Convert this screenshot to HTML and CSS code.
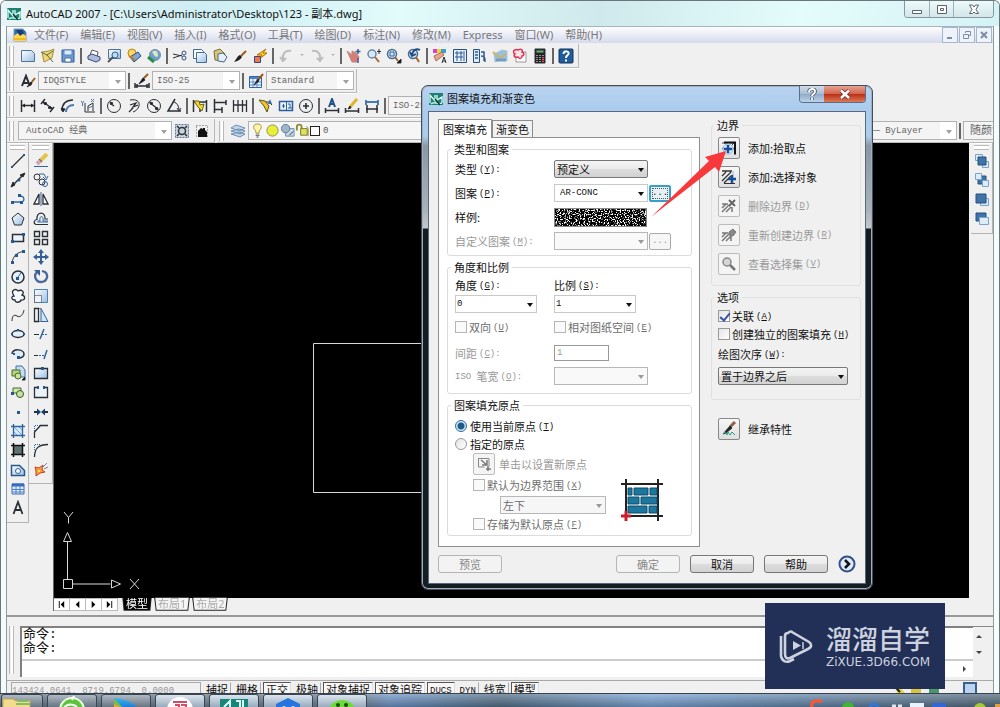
FILE: index.html
```html
<!DOCTYPE html>
<html lang="zh-CN">
<head>
<meta charset="utf-8">
<title>AutoCAD 2007</title>
<link rel="stylesheet" href="styles.css">
</head>
<body>
<svg width="0" height="0" class="defs" aria-hidden="true">
  <defs>
    <linearGradient id="sky" x1="0" y1="0" x2="1" y2="1"><stop offset="0" stop-color="#fff"/><stop offset="1" stop-color="#9cc0e4"/></linearGradient>
    <linearGradient id="play" x1="0" y1="0" x2="0" y2="1"><stop offset="0" stop-color="#36b8f0"/><stop offset="1" stop-color="#1c6fd0"/></linearGradient>
    <filter id="speckle" x="0" y="0" width="100%" height="100%">
      <feTurbulence type="fractalNoise" baseFrequency="0.75" numOctaves="2" seed="4"/>
      <feColorMatrix values="0 0 0 0 1  0 0 0 0 1  0 0 0 0 1  7 0 0 0 -3.5"/>
    </filter>
    <symbol id="logo" viewBox="0 0 16 16"><path d="M1 2h14v12H1z" fill="#1d8073"/><path d="M2 12V4l5 6V4M9 4v5l5-3v6M3 13c3-3 7 1 11-1" fill="none" stroke="#d9fff5" stroke-width="1.3"/><path d="M7 8l5 6" stroke="#083b38" stroke-width="1.4"/></symbol>
  </defs>
</svg>

<main class="app">
  <header class="titlebar">
    <svg class="ic"><use href="#logo"/></svg>
    <h1>AutoCAD 2007 - [C:\Users\Administrator\Desktop\123 - 副本.dwg]</h1>
    <div class="winbtns">
      <button aria-label="最小化"><svg viewBox="0 0 12 12"><path d="M1.500 7.500h9v3h-9z"/></svg></button>
      <button aria-label="最大化"><svg viewBox="0 0 12 12"><path d="M1.500 2.500h9v8h-9zM4.500 5.500h3v2h-3z"/></svg></button>
      <button class="wide" aria-label="关闭"><svg viewBox="0 0 12 12"><path d="M1.500 2h3L6 4l1.500-2h3L8 6.500l2.500 4h-3L6 9l-1.500 1.500h-3L4 6.500z"/></svg></button>
    </div>
  </header>

  <div class="client">
    <nav class="menubar">
      <svg class="ic" viewBox="0 0 16 16"><path d="M2 2h9l3 3v9H2z" fill="#2d6db5" stroke="#7a98b8"/><path d="M2 9c4-4 8-3 12 0v5H2z" fill="#ffd84d" stroke="none"/><path d="M4 3h6l2 3-4 3z" fill="#163e74" stroke="none"/><path d="M1 12h13" stroke="#f3b923" stroke-width="2"/></svg>
      <button>文件(F)</button><button>编辑(E)</button><button>视图(V)</button><button>插入(I)</button><button>格式(O)</button><button>工具(T)</button><button>绘图(D)</button><button>标注(N)</button><button>修改(M)</button><button>Express</button><button>窗口(W)</button><button>帮助(H)</button>
      <div class="mdi">
        <button aria-label="最小化文档"><svg viewBox="0 0 12 12"><path d="M3 9h5" stroke-width="2"/></svg></button>
        <button aria-label="还原文档"><svg viewBox="0 0 12 12"><path d="M4.500 4V2.500h5v4H8M2.500 5.500h5v4h-5z"/></svg></button>
        <button aria-label="关闭文档"><svg viewBox="0 0 12 12"><path d="M3 3l6 6M9 3l-6 6" stroke-width="2"/></svg></button>
      </div>
    </nav>

    <section class="toolrows">
      <div class="toolrow"><div class="toolbar">
        <i class="grip"></i>
        <button aria-label="新建"><svg class="ic" viewBox="0 0 16 16"><path d="M1.500 2.500h10l3 3v8h-13z" fill="url(#sky)" stroke="#4f7396"/></svg></button>
        <button aria-label="打开"><svg class="ic" viewBox="0 0 16 16"><path d="M2 4l7-1 5-2-2 9-8 4z" fill="#f1d671" stroke="#a88f42"/><path d="M1 4l6 3 6-4M7 7l6 7" stroke="#4f6f4c"/></svg></button>
        <button aria-label="保存"><svg class="ic" viewBox="0 0 16 16"><path d="M2 2h12v12H2z" fill="#6d9acf" stroke="#2f5f99"/><path d="M4 2h8v5H4z" fill="#d9eafb" stroke="#5b86b7"/><path d="M5 10h6v4H5z" fill="#fff" stroke="#4d78a8"/></svg></button>
        <i class="sep"></i>
        <button aria-label="打印"><svg class="ic" viewBox="0 0 16 16"><path d="M4 7l2-5 6 2-1 5" fill="#fff" stroke="#556"/><path d="M2 8l4-2 8 3v3l-4 2-8-3z" fill="#aebbdc" stroke="#3b4a78"/></svg></button>
        <button aria-label="打印预览"><svg class="ic" viewBox="0 0 16 16"><path d="M2.500 1.500h12v9h-12z" fill="url(#sky)" stroke="#4f7396"/><circle cx="9" cy="7" r="3" fill="#b9dcf7" stroke="#35618c"/><path d="M7 9l-5 5" stroke="#555" stroke-width="2"/></svg></button>
        <button aria-label="发布"><svg class="ic" viewBox="0 0 16 16"><circle cx="6" cy="5" r="4" fill="#ffd95e" stroke="#bb8616"/><path d="M4 9l8-5 3 4-7 6z" fill="#7fa6d4" stroke="#274c7e"/><path d="M3 8l6 4" stroke="#c67b18" stroke-width="2"/></svg></button>
        <button aria-label="三维 DWF"><svg class="ic" viewBox="0 0 16 16"><circle cx="9" cy="7" r="5.500" fill="#6d9fca" stroke="#6f93b2"/><path d="M6 4c4-3 6 0 6 3s-3 2-4 0z" fill="#d9e8c1" stroke="none"/><path d="M2 9l6 5" stroke="#2f8c44" stroke-width="3"/></svg></button>
        <i class="sep"></i>
        <button aria-label="剪切"><svg class="ic" viewBox="0 0 16 16"><path d="M1 6l9 2M1 10l9-3"/><circle cx="12" cy="5" r="2" stroke="#334f86"/><circle cx="12" cy="10" r="2" stroke="#334f86"/></svg></button>
        <button aria-label="复制"><svg class="ic" viewBox="0 0 16 16"><path d="M1.500 1.500h8l2 2v7h-10z" fill="#fff" stroke="#3e6d9c"/><path d="M4.500 4.500h8l2 2v8h-10z" fill="url(#sky)" stroke="#3e6d9c"/></svg></button>
        <button aria-label="粘贴"><svg class="ic" viewBox="0 0 16 16"><path d="M2 3l6-2 5 5-3 7-7-1z" fill="#d6c67b" stroke="#7d6e36"/><path d="M6 6l5-1 4 4-3 5-6-1z" fill="#e4f0fb" stroke="#45688d"/></svg></button>
        <button aria-label="特性匹配"><svg class="ic" viewBox="0 0 16 16"><path d="M14 3L9 8" stroke="#9a5b21" stroke-width="2"/><path d="M8 7l2 2c-2 3-4 4-8 5 2-2 3-6 6-7z" fill="#222" stroke="none"/></svg></button>
        <button aria-label="块编辑器"><svg class="ic" viewBox="0 0 16 16"><path d="M14 1l-9 6h5l-4 5 9-7h-4z" fill="#ffd21a" stroke="#b76b00"/><path d="M2.500 8.500h6v6h-6z" fill="#f4764e" stroke="#2f4b7b"/></svg></button>
        <i class="sep"></i>
        <button aria-label="放弃"><svg class="ic" viewBox="0 0 16 16"><path d="M13 3C7 2 4 6 5 12M2 9l3 4 3-3" stroke="#bdbdbd" stroke-width="2"/></svg></button>
        <button class="drop" aria-label="放弃列表"></button>
        <button aria-label="重做"><svg class="ic" viewBox="0 0 16 16"><path d="M3 3c6-1 9 3 8 9M8 10l3 3 3-4" stroke="#bdbdbd" stroke-width="2"/></svg></button>
        <button class="drop" aria-label="重做列表"></button>
        <i class="sep"></i>
        <button aria-label="实时平移"><svg class="ic" viewBox="0 0 16 16"><path d="M1 3l5 4V3l4 2 3 4-2 5H6z" fill="#d77d75" stroke="#c08883"/><path d="M12 1v5M9.500 3.500h5M12 10v5" stroke="#355f96" stroke-width="1.500"/></svg></button>
        <button aria-label="实时缩放"><svg class="ic" viewBox="0 0 16 16"><circle cx="6" cy="6" r="4" fill="#d7e9f7" stroke="#6889a7" stroke-width="1.500"/><path d="M9 9l4 5" stroke="#a4662f" stroke-width="2"/><path d="M13 1v5M11 3.500h4"/></svg></button>
        <button aria-label="窗口缩放"><svg class="ic" viewBox="0 0 16 16"><circle cx="6" cy="6" r="4.500" fill="#d7e9f7" stroke="#456b90" stroke-width="1.500"/><path d="M4 4h4v4H4z" stroke="#2e5a99"/><path d="M9 9l3 4" stroke="#a4662f" stroke-width="2"/><path d="M15 11v4h-4z" fill="#111"/></svg></button>
        <button aria-label="缩放上一个"><svg class="ic" viewBox="0 0 16 16"><circle cx="7" cy="6" r="4.500" fill="#d7e9f7" stroke="#456b90" stroke-width="1.500"/><path d="M10 9l3 5" stroke="#a4662f" stroke-width="2"/><path d="M14 2c-4-2-7 0-8 5M4 4l2 4 4-2" stroke="#234b83" stroke-width="1.800"/></svg></button>
        <i class="sep"></i>
        <button aria-label="特性"><svg class="ic" viewBox="0 0 16 16"><g stroke="none"><path d="M1 1h4v4H1z" fill="#e33ad2"/><path d="M5 1h4v4H5z" fill="#f0d91f"/><path d="M9 1h5v4H9z" fill="#2fa1e0"/></g><path d="M2 8l8-4 2 3-8 6z" fill="#e9a58c" stroke="#a9705b"/><path d="M10 15l2-6 2 6M11 13h3"/></svg></button>
        <button aria-label="设计中心"><svg class="ic" viewBox="0 0 16 16"><path d="M1.500 1.500h13v13h-13z" fill="#e5f0fa" stroke="#27507f"/><path d="M4 4h2v2H4zM8 4h2v2H8zM4 8h2v2H4zM8 8h2v2H8zM4 12h2M8 12h2M12 3v10" stroke="#2c5b93"/></svg></button>
        <button aria-label="工具选项板"><svg class="ic" viewBox="0 0 16 16"><path d="M1.500 1.500h6v13h-6z" fill="#dceaf7" stroke="#27507f"/><path d="M3 4h3M3 7h3M3 10h3M9 4h3v9M9 8c4 0 4 2 4 6" stroke="#2c5b93" stroke-width="1.500"/></svg></button>
        <button aria-label="图纸集"><svg class="ic" viewBox="0 0 16 16"><path d="M2 6l8-4 5 1v10l-6-2-6 3z" fill="#9ebfd9" stroke="#a9c4d8"/><path d="M1 4l7 6 6-4" stroke="#c8b36f" stroke-width="2"/><path d="M4 12h10" stroke="#6f9dc4" stroke-width="3"/></svg></button>
        <button aria-label="标记集"><svg class="ic" viewBox="0 0 16 16"><path d="M4 4h10v10H4z" fill="#fff" stroke="#999"/><path d="M3 2c2-1 3 0 3 0 3-2 5 0 4 2 3 1 2 4 0 4 0 3-3 3-4 1-3 1-5-1-3-3-2-1-2-4 0-4z" fill="#ffe4ea" stroke="#e03052" stroke-width="1.500"/></svg></button>
        <button aria-label="计算器"><svg class="ic" viewBox="0 0 16 16"><path d="M3 1h10v14H3z" fill="#222"/><path d="M4 2h8v3H4z" fill="#63b46c"/><path d="M5 7v7M8 7v7M11 7v7" stroke="#fff" stroke-dasharray="1 1"/><path d="M11 9v5" stroke="#e33"/></svg></button>
        <i class="sep"></i>
        <button aria-label="帮助"><svg class="ic" viewBox="0 0 16 16"><rect x="1" y="1" width="14" height="14" rx="1" fill="#1f5b98" stroke="#12355f"/><path d="M5.500 6c0-4 6-3 5 0-.6 1.500-2.500 1.500-2.500 4M8 11.500v2" stroke="#fff" stroke-width="2"/></svg></button>
      </div></div>

      <div class="toolrow"><div class="toolbar">
        <i class="grip"></i>
        <button aria-label="文字样式"><svg class="ic" viewBox="0 0 16 16"><path d="M2 13L6 3l4 10M3 10h6" stroke-width="2"/><path d="M15 5l-4 5" stroke="#9a5b21" stroke-width="2"/><path d="M11 9l-4 5 5-3z" fill="#111"/></svg></button>
        <span class="combo"><select class="style" aria-label="文字样式控制"><option>IDQSTYLE</option></select></span>
        <i class="sep"></i>
        <button aria-label="标注样式"><svg class="ic" viewBox="0 0 16 16"><path d="M1 13h14M1 10v5M15 10v5M3 11v4M13 11v4" stroke-width="1.500"/><path d="M14 1L9 6" stroke="#9a5b21" stroke-width="2"/><path d="M9 5l2 2-6 4z" fill="#111"/></svg></button>
        <span class="combo"><select class="style" aria-label="标注样式控制"><option>ISO-25</option></select></span>
        <i class="sep"></i>
        <button aria-label="表格样式"><svg class="ic" viewBox="0 0 16 16"><path d="M1.500 3.500h12v11h-12z" fill="#eef6ff" stroke="#35639b"/><path d="M2 4h11v2H2z" fill="#4a83c9" stroke="none"/><path d="M2 9h11M2 12h11M5 6v8M9 6v8" stroke="#5a8ccb"/><path d="M15 1l-5 6" stroke="#9a5b21" stroke-width="2"/><path d="M10 6l1 2-5 4z" fill="#111"/></svg></button>
        <span class="combo"><select class="style" aria-label="表格样式控制"><option>Standard</option></select></span>
      </div></div>

      <div class="toolrow"><div class="toolbar">
        <i class="grip"></i>
        <button aria-label="线性"><svg class="ic" viewBox="0 0 16 16"><path d="M1.500 2v12M14.500 2v12M2 7.500h12" stroke-width="1.500"/><path d="M2 7.500l3-2v4zM14 7.500l-3-2v4z" fill="#222" stroke="none"/></svg></button>
        <button aria-label="对齐"><svg class="ic" viewBox="0 0 16 16"><path d="M1 6l4-5M10 14l4-5M3 4l10 7" stroke-width="1.500"/><path d="M3 4l4 1-2 2zM12 11l-4-1 2-2z" fill="#222"/></svg></button>
        <button aria-label="弧长"><svg class="ic" viewBox="0 0 16 16"><path d="M2 13C2 6 6 2 13 2" stroke-width="1.500"/><path d="M6 14c0-4 3-7 8-7" stroke="#4a7bb0" stroke-width="2"/><path d="M1 10l2 4 2-3z" fill="#222"/></svg></button>
        <button aria-label="坐标"><svg class="ic" viewBox="0 0 16 16"><path d="M5 5v9h10M8 13V8l5-3v8"/><path d="M1 3l1.500 2L4 3M2.500 5v3M11 1l3 3M14 1l-3 3M8 10l5-2" stroke="#4a7bb0"/></svg></button>
        <i class="sep"></i>
        <button aria-label="半径"><svg class="ic" viewBox="0 0 16 16"><circle cx="8" cy="8" r="6.500"/><path d="M8 8L4 5" stroke-width="1.500"/><path d="M4 4l3 1-2 2z" fill="#222"/></svg></button>
        <button aria-label="折弯"><svg class="ic" viewBox="0 0 16 16"><path d="M4 2c6-1 10 1 9 6-1 3-3 5-6 6"/><path d="M4 7l6-2-3 4 5-2M7 10l-4 4" stroke-width="1.300"/></svg></button>
        <button aria-label="直径"><svg class="ic" viewBox="0 0 16 16"><circle cx="8" cy="8" r="6.500"/><path d="M3.500 4.500l9 7" stroke-width="1.300"/><path d="M4 4l3 1-2 2zM12 12l-3-1 2-2z" fill="#222"/></svg></button>
        <button aria-label="角度"><svg class="ic" viewBox="0 0 16 16"><path d="M9 1L2 13h13" stroke-width="1.500"/><path d="M8 4c3 1 5 4 5 8M11 10l2 3 2-3"/></svg></button>
        <i class="sep"></i>
        <button aria-label="快速标注"><svg class="ic" viewBox="0 0 16 16"><path d="M1.500 2v12M14.500 2v12M8 8v6M2 4h12" stroke-width="1.500"/><path d="M2 3h5l1 4 4-1-2 7-4-4z" fill="#f4d72e" stroke="#6b6110"/></svg></button>
        <button aria-label="基线"><svg class="ic" viewBox="0 0 16 16"><path d="M2.500 1v14M14 2v5M10 9v6M3 4.500h11M3 11.500h7" stroke-width="1.500"/></svg></button>
        <button aria-label="连续"><svg class="ic" viewBox="0 0 16 16"><path d="M1.500 2v12M6 2v12M10.500 2v12M14.500 2v12M2 7h12" stroke-width="1.300"/></svg></button>
        <i class="sep"></i>
        <button aria-label="快速引线"><svg class="ic" viewBox="0 0 16 16"><path d="M3 4h8l3 3"/><path d="M1 2l6 1 4 5-2 6-3-6z" fill="#f4c52e" stroke="#5a5510"/><path d="M12 1l2 5h-4z" fill="#3568aa" stroke="none"/></svg></button>
        <button aria-label="公差"><svg class="ic" viewBox="0 0 16 16"><path d="M1.500 3.500h13v9h-13z" fill="#e7f2fd" stroke="#2a5f9e" stroke-width="1.500"/><path d="M8.500 4v8M4 8h3M5.500 6v4M10 6h2v4M10 10h4" stroke="#2a5f9e"/></svg></button>
        <button aria-label="圆心标记"><svg class="ic" viewBox="0 0 16 16"><circle cx="8" cy="8" r="6.500"/><path d="M8 5v6M5 8h6" stroke-width="1.600"/></svg></button>
        <i class="sep"></i>
        <button aria-label="编辑标注"><svg class="ic" viewBox="0 0 16 16"><path d="M1 12.500h14M1.500 10v5M14.500 10v5" stroke-width="1.500"/><path d="M5 9l3-8 3 8M6 6h4" stroke="#205187" stroke-width="2"/></svg></button>
        <button aria-label="编辑标注文字"><svg class="ic" viewBox="0 0 16 16"><path d="M1 13h14M1.500 10v5M14.500 10v5" stroke-width="1.500"/><path d="M13 1L6 9" stroke="#e0b52e" stroke-width="3"/><path d="M6 8l-2 3 3-1z" fill="#222"/></svg></button>
        <button aria-label="标注更新"><svg class="ic" viewBox="0 0 16 16"><path d="M2 4h12M2 2v5M14 2v5" stroke="#4a7bb0" stroke-width="2"/><path d="M2 11h12M3 7v8M13 7v8" stroke-width="1.500"/></svg></button>
        <i class="sep"></i>
        <span class="combo"><select class="style wide" aria-label="标注样式"><option>ISO-25</option></select></span>
      </div></div>

      <div class="toolrow">
        <div class="toolbar">
          <i class="grip"></i>
          <span class="combo"><select class="workspace" aria-label="工作空间"><option>AutoCAD 经典</option></select></span>
          <button aria-label="工作空间设置"><svg class="ic" viewBox="0 0 16 16"><path d="M1.500 1.500h13v13h-13z" stroke="#5b7896" stroke-dasharray="2 1" fill="#c7d3de"/><circle cx="8" cy="8" r="3.500" stroke="#333" stroke-width="1.500"/><path d="M3 3l2 2M13 3l-2 2M3 13l2-2M13 13l-2-2" stroke-width="1.500"/></svg></button>
          <button aria-label="我的工作空间"><svg class="ic" viewBox="0 0 16 16"><path d="M2.500 2.500h11v11h-11z" stroke-dasharray="1 2" stroke="#555"/><path d="M4 8l3-3 2 1V5h2v2l2 2v5H4z" fill="#111" stroke="none"/></svg></button>
        </div>
        <div class="toolbar grow">
          <i class="grip"></i>
          <button aria-label="图层特性"><svg class="ic" viewBox="0 0 16 16"><path d="M1 11l9 3 5-3-6-2zM1 8l9 3 5-3-6-2zM1 5l9 3 5-3-9-3z" fill="#c3d5e6" stroke="#6d90b4"/></svg></button>
          <div class="layerbox">
            <svg class="ic" viewBox="0 0 16 16"><path d="M8 1c5 0 5 5 2 7l-.5 3h-3L6 8C3 6 3 1 8 1z" fill="#fff7a8" stroke="#a48a37"/><path d="M6 13h4M7 15h2"/></svg>
            <svg class="ic" viewBox="0 0 16 16"><circle cx="8" cy="8" r="6" fill="#e9ee38" stroke="#8d8d55"/></svg>
            <svg class="ic" viewBox="0 0 16 16"><path d="M6 6h9v8H6z" fill="#c8dcec" stroke="#6f8ca6"/><circle cx="6" cy="6" r="4.500" fill="#9eb6cb" stroke="#61798e"/><path d="M10 13l4-4"/></svg>
            <svg class="ic" viewBox="0 0 16 16"><path d="M2 8V4c0-3 5-3 5 0v3" stroke="#8c8b32" stroke-width="2"/><path d="M6 6h7v7H6z" fill="#dfe45a" stroke="#77762c"/><path d="M12 4c3 0 2 5 2 10" stroke="#8c8b32"/></svg>
            <i class="swatch"></i><span>0</span>
          </div>
          <span class="combo fill"><select class="bylayer" aria-label="线型"><option>── ByLayer</option></select></span>
          <i class="sep"></i>
          <span class="combo clip"><select class="color" aria-label="打印样式"><option>随颜色</option></select></span>
        </div>
      </div>
    </section>

    <section class="workspace-area">
      <div class="vbar draw">
        <i class="hgrip"></i>
        <button aria-label="直线"><svg class="ic" viewBox="0 0 16 16"><path d="M2 14L14 2" stroke-width="1.300"/><path d="M1 13h2v2H1zM13 1h2v2h-2z" class="n"/></svg></button>
        <button aria-label="构造线"><svg class="ic" viewBox="0 0 16 16"><path d="M2 14L14 2" stroke-width="1.500"/><path d="M1 15l2-5 2 3zM15 1l-5 2 3 2z" fill="#222"/><circle cx="9" cy="8" r="1.500" class="n"/></svg></button>
        <button aria-label="多段线"><svg class="ic" viewBox="0 0 16 16"><path d="M2 11h9c4 0 4-6-1-6" class="b" stroke-width="1.300"/><path d="M1 10h3v3H1zM8 3h3v3H8zM10 10h3v3h-3z" class="n"/></svg></button>
        <button aria-label="正多边形"><svg class="ic" viewBox="0 0 16 16"><path d="M8 2l6 5-2.500 7h-7L2 7z" fill="url(#sky)"/></svg></button>
        <button aria-label="矩形"><svg class="ic" viewBox="0 0 16 16"><path d="M2.500 4.500h11v7h-11z" fill="#e9f3fb" stroke-width="1.500"/><path d="M1 10h3v3H1zM12 3h3v3h-3z" class="n"/></svg></button>
        <button aria-label="圆弧"><svg class="ic" viewBox="0 0 16 16"><path d="M2 14C3 7 7 3 14 2.500"/><path d="M1 12h3v3H1zM5 5h3v3H5zM12 1h3v3h-3z" class="n"/></svg></button>
        <button aria-label="圆"><svg class="ic" viewBox="0 0 16 16"><circle cx="8" cy="8" r="6" fill="#e3effa" stroke-width="1.500"/><path d="M8 8l3-4" class="b"/><path d="M6 8h3v3H6z" class="n"/></svg></button>
        <button aria-label="修订云线"><svg class="ic" viewBox="0 0 16 16"><path d="M3 6C1 2 6 0 8 3c4-2 7 1 4 4 4 1 3 6-1 5-1 3-6 3-6 0-4 0-4-4-1-4z" fill="#f4f9ff" stroke-width="1.300"/></svg></button>
        <button aria-label="样条曲线"><svg class="ic" viewBox="0 0 16 16"><path d="M2 14c0-5 2-7 5-5s6-1 7-6"/></svg></button>
        <button aria-label="椭圆"><svg class="ic" viewBox="0 0 16 16"><ellipse cx="8" cy="8" rx="6" ry="3.500" fill="#e3effa" stroke-width="1.500"/><path d="M1 7h2v2H1zM13 7h2v2h-2zM7 3h2v2H7z" class="n"/></svg></button>
        <button aria-label="椭圆弧"><svg class="ic" viewBox="0 0 16 16"><path d="M2 8c0-6 12-5 12 0 0 3-3 4-6 4" fill="#dcecf9" stroke-width="1.500"/><path d="M3 7h2v2H3zM7 10h3v3H7z" class="n"/></svg></button>
        <button aria-label="插入块"><svg class="ic" viewBox="0 0 16 16"><path d="M6 1h6l3 4v7H6z" fill="#c5dcf2" stroke="#3f70a4"/><path d="M2 5h8v6H2z" fill="#b6d57b" stroke="#456a2b"/><circle cx="8" cy="11" r="3" fill="#cbe09d" stroke="#456a2b"/><path d="M15 12v3h-3z" fill="#111"/></svg></button>
        <button aria-label="创建块"><svg class="ic" viewBox="0 0 16 16"><path d="M3 4h8v5H3z" fill="#d5e6b5" stroke="#456a2b"/><circle cx="10" cy="10" r="3.500" fill="#cbe09d" stroke="#305f2b"/><path d="M1 8h3v3H1z" class="n"/></svg></button>
        <button aria-label="点"><svg class="ic" viewBox="0 0 16 16"><path d="M7 7h3v3H7z" class="n"/></svg></button>
        <button aria-label="图案填充"><svg class="ic" viewBox="0 0 16 16"><path d="M3 3h10v10H3z" fill="#d9eafa" stroke="none"/><path d="M3 3l10 10M8 3l5 5M3 8l5 5" stroke="#7ba7d3"/><path d="M1 3.500h14M1 12.500h14M3.500 1v14M12.500 1v14" class="b" stroke-width="1.300"/></svg></button>
        <button aria-label="渐变色"><svg class="ic" viewBox="0 0 16 16"><path d="M3 3h10v10H3z" fill="#5e7272" stroke="none"/><path d="M1 3.500h14M1 12.500h14M3.500 1v14M12.500 1v14" stroke="#111" stroke-width="1.500"/></svg></button>
        <button aria-label="面域"><svg class="ic" viewBox="0 0 16 16"><path d="M1.500 3.500h8l5 5v5h-13z" fill="url(#sky)" stroke="#29598c" stroke-width="1.500"/><circle cx="8" cy="9" r="2.500" fill="#fff" class="b"/></svg></button>
        <button aria-label="表格"><svg class="ic" viewBox="0 0 16 16"><path d="M2 3h12v10H2z" fill="#e3f0ff" stroke="#426dab"/><path d="M2 4h12" stroke="#356ac0" stroke-width="3"/><path d="M2 8.500h12M2 11h12M6 4v9M10 4v9" stroke="#4f7fc8"/></svg></button>
        <button aria-label="多行文字"><svg class="ic" viewBox="0 0 16 16"><path d="M3.500 14L8 2l4.500 12M5 10h6" stroke-width="1.800"/></svg></button>
      </div>
      <div class="vbar modify">
        <i class="hgrip"></i>
        <button aria-label="删除"><svg class="ic" viewBox="0 0 16 16"><path d="M1 13.500h14" class="b"/><path d="M14 1L8 7" stroke="#e2c64b" stroke-width="4"/><path d="M8 7l-1 1" stroke="#666" stroke-width="4"/><path d="M7 8l-3 3" stroke="#d9a3b4" stroke-width="4"/></svg></button>
        <button aria-label="复制对象"><svg class="ic" viewBox="0 0 16 16"><circle cx="4" cy="5" r="3"/><circle cx="9" cy="10" r="3"/><circle cx="12" cy="12" r="2.500" class="b"/><path d="M6 2h5l2 4M10 5l3 3 2-4" class="b"/></svg></button>
        <button aria-label="镜像"><svg class="ic" viewBox="0 0 16 16"><path d="M6 3v10H1zM10 3v10h5z" fill="#fff" stroke-width="1.300"/><path d="M8 1v14" class="b"/></svg></button>
        <button aria-label="偏移"><svg class="ic" viewBox="0 0 16 16"><path d="M15 13.500H3c-3-1-2-5 1-5C3 0 13 0 12 8h3" stroke-width="1.200"/><path d="M15 11H5c-1 0-1-1 1-1h1c-1-6 4-6 3 0h5" class="b"/></svg></button>
        <button aria-label="阵列"><svg class="ic" viewBox="0 0 16 16"><path d="M1.500 1.500h5v5h-5zM9.500 1.500h5v5h-5zM1.500 9.500h5v5h-5zM9.500 9.500h5v5h-5z" stroke-width="1.400"/></svg></button>
        <button aria-label="移动"><svg class="ic" viewBox="0 0 16 16"><path d="M8 2v12M2 8h12" stroke="#355f96" stroke-width="2"/><path d="M8 0l3 4H5zM8 16l3-4H5zM0 8l4-3v6zM16 8l-4-3v6z" fill="#355f96" stroke="none"/></svg></button>
        <button aria-label="旋转"><svg class="ic" viewBox="0 0 16 16"><path d="M4 4c-4 4-1 10 4 10 6 0 8-7 4-10l-3-1" stroke="#49699c" stroke-width="2.300"/><path d="M1 2h6v6z" fill="#355f96" stroke="none"/></svg></button>
        <button aria-label="缩放"><svg class="ic" viewBox="0 0 16 16"><path d="M1.500 1.500h13v13h-13z" fill="url(#sky)" stroke="#4f81b8"/><path d="M1.500 7.500h7v7h-7z" fill="#eef4fa" stroke-dasharray="1 1"/></svg></button>
        <button aria-label="拉伸"><svg class="ic" viewBox="0 0 16 16"><path d="M1.500 1.500h4v13h-4z" stroke-width="1.300"/><path d="M8 1.500v13h7z" fill="#d2e5f6" class="b"/><path d="M5.500 1.500H8M5.500 14.500H8" stroke-dasharray="1 1"/></svg></button>
        <button aria-label="修剪"><svg class="ic" viewBox="0 0 16 16"><path d="M1 8.500h5"/><path d="M11 3L7 13" class="b" stroke-width="1.500"/><path d="M9 8.500h6" class="b" stroke-dasharray="2 1"/></svg></button>
        <button aria-label="延伸"><svg class="ic" viewBox="0 0 16 16"><path d="M1 9.500h4"/><path d="M14 4l-3 9" class="b" stroke-width="1.500"/><path d="M6 9.500h5" class="b" stroke-dasharray="2 1"/></svg></button>
        <button aria-label="打断于点"><svg class="ic" viewBox="0 0 16 16"><path d="M1.500 3.500h13v10h-13z" fill="url(#sky)" stroke-width="1.300"/><path d="M8 2h3v3H8z" class="n"/></svg></button>
        <button aria-label="打断"><svg class="ic" viewBox="0 0 16 16"><path d="M5 3.500H1.500v10h13v-10H11" fill="#eaf3fc" stroke-width="1.300"/><path d="M4 2h2v3H4zM10 2h2v3h-2z" class="n"/></svg></button>
        <button aria-label="合并"><svg class="ic" viewBox="0 0 16 16"><path d="M1 8h5M10 8h5" stroke-width="2"/><path d="M8 8L4 4.500v7zM8 8l4-3.500v7z" fill="#163e6a" stroke="none"/></svg></button>
        <button aria-label="倒角"><svg class="ic" viewBox="0 0 16 16"><path d="M1.500 15V9l6-6.500H15" stroke-width="1.300"/><path d="M1.500 8V2.500H7" class="b" stroke-dasharray="1 1"/></svg></button>
        <button aria-label="圆角"><svg class="ic" viewBox="0 0 16 16"><path d="M1.500 15C1.500 6 6 2.500 15 2.500" stroke-width="1.300"/><path d="M1.500 8V2.500H7" class="b" stroke-dasharray="1 1"/></svg></button>
        <button aria-label="分解"><svg class="ic" viewBox="0 0 16 16"><path d="M2 6l4 1 4-3-1 5 3 2-5 1-4 3v-5z" fill="#f3a136" stroke="#d3392a"/><path d="M9 7l5-5M11 8l4-2" stroke="#70859b"/><path d="M5 9h2v2H5z" fill="#ffeb3c" stroke="none"/></svg></button>
      </div>

      <div class="model">
        <svg class="canvas" role="img" aria-label="绘图区">
          <g fill="none" stroke="#d8d8d8">
            <path d="M259.500 200.500h260v149h-260z"/>
            <path d="M13.500 436.500v-38M18.500 441h38M9.500 436.500h9v9h-9zM13.500 389.500l4 9h-8zM66.500 441l-9-4v8z"/>
            <path d="M10 369l4.500 5.500L19 369M14.500 374.500v6M76 436l9 10M85 436l-9 10"/>
          </g>
        </svg>
        <div class="layout-tabs">
          <button aria-label="首个"><svg viewBox="0 0 10 10"><path d="M2 1h1v8H2zM8 1v8L4 5z"/></svg></button>
          <button aria-label="上一个"><svg viewBox="0 0 10 10"><path d="M7 1v8L3 5z"/></svg></button>
          <button aria-label="下一个"><svg viewBox="0 0 10 10"><path d="M3 1v8l4-4z"/></svg></button>
          <button aria-label="末个"><svg viewBox="0 0 10 10"><path d="M2 1v8l4-4zM7 1h1v8H7z"/></svg></button>
          <a href="#model" class="active"><span>模型</span></a><a href="#layout1"><span>布局1</span></a><a href="#layout2"><span>布局2</span></a>
        </div>
      </div>

      <div class="vbar order">
        <i class="hgrip"></i>
        <button aria-label="前置"><svg class="ic" viewBox="0 0 16 16"><path d="M1.500 1.500h7v6h-7zM8.500 8.500h6v6h-6z" fill="#dcecf9" stroke="#7ba3cb"/><path d="M4 4h8v8H4z" fill="#3f74a8" stroke="#264f7d"/></svg></button>
        <button aria-label="后置"><svg class="ic" viewBox="0 0 16 16"><path d="M4 4h8v8H4z" fill="#3f74a8" stroke="#264f7d"/><path d="M1.500 1.500h6v6h-6zM8.500 8.500h6v6h-6z" fill="#dcecf9" stroke="#7ba3cb"/></svg></button>
        <button aria-label="置于对象之上"><svg class="ic" viewBox="0 0 16 16"><path d="M6.500 6.500h8v7h-8z" fill="#dcecf9" stroke="#7ba3cb"/><path d="M2 2h10v9H2z" fill="#3f74a8" stroke="#264f7d"/></svg></button>
        <button aria-label="置于对象之下"><svg class="ic" viewBox="0 0 16 16"><path d="M2 2h10v8H2z" fill="#3f74a8" stroke="#264f7d"/><path d="M5.500 6.500h9v7h-9z" fill="#dcecf9" stroke="#7ba3cb"/></svg></button>
      </div>
    </section>

    <section class="command">
      <i class="grip"></i>
      <div class="cmdbox">
        <div class="history"><p>命令:</p><p>命令:</p></div>
        <input aria-label="命令行" type="text">
      </div>
      <div class="scroll"><i class="up"></i><i class="down"></i><i class="right"></i></div>
    </section>

    <footer class="status">
      <output>143424.0641, 8719.6794, 0.0000</output>
      <button>捕捉</button><button>栅格</button><button class="on">正交</button><button>极轴</button><button class="on">对象捕捉</button><button class="on">对象追踪</button><button class="on">DUCS</button><button>DYN</button><button>线宽</button><button class="on">模型</button>
      <div class="tray">
        <svg viewBox="0 0 50 12"><path d="M4 2l5 3 5 6H6z" fill="#e8d33c"/><path d="M3 4l6 6M9 2l4 4" stroke="#222" stroke-width="2"/><rect x="20" y="3" width="10" height="9" fill="#d8c33c"/><path d="M22 4c0-4 7-4 7 0" fill="none" stroke="#333" stroke-width="2"/><circle cx="33" cy="5" r="2" fill="#333"/><path d="M38 5l7-3 3 3v7H38z" fill="#4a986a"/></svg>
        <i class="cleanscreen"></i>
      </div>
    </footer>
  </div>
</main>

<nav class="taskbar">
  <button aria-label="资源管理器"><svg viewBox="0 0 40 14"><path d="M1 4h10l3 2h14v8H1z" fill="#f3dc8e" stroke="#c7a654"/><path d="M14 9h14M16 6h10" stroke="#7fbf68" stroke-width="2"/></svg></button>
  <button aria-label="浏览器"><svg viewBox="0 0 40 14"><circle cx="20" cy="15" r="12" fill="#5fc43d" stroke="#e9ffe1" stroke-width="2"/><path d="M12 13c3-5 10-4 13-1M20 5l2-4" fill="none" stroke="#fff" stroke-width="2"/></svg></button>
  <button aria-label="播放器"><svg viewBox="0 0 40 14"><path d="M8 4l14 7-2 3H8z" fill="#70bf4b"/><path d="M8 3c12 1 20 5 24 11H18z" fill="url(#play)"/><path d="M8 9l10 5H8z" fill="#f4a52c"/></svg></button>
  <button class="light" aria-label="百度"><svg viewBox="0 0 40 14"><circle cx="20" cy="15" r="13" fill="#fff"/><path d="M13 7h14M15 10h4v4M21 10h5v4M14 13h12" fill="none" stroke="#d94c68" stroke-width="2"/></svg></button>
  <button class="light" aria-label="AutoCAD"><svg viewBox="0 0 40 14"><path d="M6 4h28v10H6z" fill="#17857a"/><path d="M10 12l6-6v8M22 6h4v8M29 5v9" fill="none" stroke="#d9fff5" stroke-width="2"/></svg></button>
  <button class="light" aria-label="网盘"><svg viewBox="0 0 40 14"><path d="M8 9l12-6 12 6v5H8z" fill="#2574df"/><circle cx="16" cy="13" r="2" fill="#cfe2ff"/><circle cx="25" cy="13" r="2" fill="#cfe2ff"/></svg></button>
  <button class="light" aria-label="微信"><svg viewBox="0 0 40 14"><ellipse cx="20" cy="14" rx="12" ry="9" fill="#69dc35"/><circle cx="16" cy="10" r="2" fill="#1c4b16"/><circle cx="24" cy="10" r="2" fill="#1c4b16"/></svg></button>
  <svg class="systray" viewBox="0 0 190 14"><path d="M2 14c-2-8 6-8 10-6" fill="none" stroke="#ff5630" stroke-width="3"/><circle cx="38" cy="14" r="6" fill="#43b331"/><circle cx="64" cy="14" r="4" fill="none" stroke="#2f77d8" stroke-width="3"/><path d="M82 12h4M88 12h4" stroke="#dce7ef" stroke-width="3"/><path d="M100 9h14v6h-14z" fill="#e8f3ff"/><path d="M122 9h14v6h-14z" fill="#3467d5"/><circle cx="170" cy="15" r="6" fill="#a7c934"/><path d="M185 10h5v4h-5z" fill="#e2a03c"/></svg>
</nav>

<form class="dialog" role="dialog" aria-label="图案填充和渐变色">
  <header class="dlg-title">
    <svg class="ic"><use href="#logo"/></svg>
    <h2>图案填充和渐变色</h2>
    <div class="dlg-btns">
      <button type="button" aria-label="这是什么"><svg viewBox="0 0 12 12"><path d="M3 4c0-4 7-4 6 0-.5 2-3 2-3 4M6 9.500V12" fill="none" stroke="#4e5c6c" stroke-width="3.500"/><path d="M3 4c0-4 7-4 6 0-.5 2-3 2-3 4M6 9.500V12" fill="none" stroke="#fff" stroke-width="1.800"/></svg></button>
      <button type="button" class="close" aria-label="关闭对话框"><svg viewBox="0 0 12 12"><path d="M2 2.500l8 7.500M10 2.500L2 10" stroke="#6d2c25" stroke-width="4"/><path d="M2 2.500l8 7.500M10 2.500L2 10" stroke="#fff" stroke-width="2.500"/></svg></button>
    </div>
  </header>
  <div class="dlg-client">
    <div class="columns">
      <div class="left">
        <div class="tabs" role="tablist"><button type="button" class="tab current" role="tab">图案填充</button><button type="button" class="tab" role="tab">渐变色</button></div>
        <div class="panel">
          <fieldset class="g-type">
            <legend>类型和图案</legend>
            <div class="pair"><label for="type">类型<span class="k">(<u>Y</u>):</span></label><span class="sel w94 face"><select id="type"><option>预定义</option></select></span></div>
            <div class="pair"><label for="pattern">图案<span class="k">(<u>P</u>):</span></label><span class="sel w94 flat"><select id="pattern" class="lat"><option>AR-CONC</option></select></span><button type="button" class="dots focus" aria-label="选择图案">...</button></div>
            <div class="pair"><span>样例:</span><svg class="sample" role="img" aria-label="AR-CONC 样例"><rect width="100%" height="100%" fill="#000"/><rect width="100%" height="100%" filter="url(#speckle)"/></svg></div>
            <div class="pair off"><label for="custom">自定义图案<span class="k">(<u>M</u>):</span></label><span class="sel w94"><select id="custom" disabled></select></span><button type="button" class="dots" disabled aria-label="选择自定义图案">...</button></div>
          </fieldset>
          <fieldset class="g-angle">
            <legend>角度和比例</legend>
            <div class="pair"><label for="angle">角度<span class="k">(<u>G</u>):</span></label><label for="scale">比例<span class="k">(<u>S</u>):</span></label></div>
            <div class="pair"><span class="sel w82 flat"><select id="angle" class="lat"><option>0</option></select></span><span class="sel w82 flat"><select id="scale" class="lat"><option>1</option></select></span></div>
            <div class="pair dim"><label><input type="checkbox" disabled>双向<span class="k">(<u>U</u>)</span></label><label><input type="checkbox" disabled>相对图纸空间<span class="k">(<u>E</u>)</span></label></div>
            <div class="pair off"><label for="space">间距<span class="k">(<u>C</u>):</span></label><input id="space" type="text" class="lat" value="1" disabled></div>
            <div class="pair off"><label for="pen"><span class="k iso">ISO </span>笔宽<span class="k">(<u>O</u>):</span></label><span class="sel w94"><select id="pen" disabled></select></span></div>
          </fieldset>
          <fieldset class="g-origin">
            <legend>图案填充原点</legend>
            <div class="origin">
              <label><input type="radio" name="origin" checked>使用当前原点<span class="k">(<u>T</u>)</span></label>
              <label><input type="radio" name="origin">指定的原点</label>
              <div class="in1 off"><button type="button" class="sq" disabled aria-label="设置新原点"><svg class="ic" viewBox="0 0 16 16"><path d="M2 2.500h11v8M2.500 2v9h6" stroke="#888"/><path d="M5 4l6 5M11 4v5H6M12 10v5M10 13h5" stroke="#777" stroke-width="1.500"/></svg></button><span>单击以设置新原点</span></div>
              <label class="in1 dim"><input type="checkbox" disabled>默认为边界范围<span class="k">(<u>X</u>)</span></label>
              <div class="in2"><span class="sel w106"><select disabled aria-label="边界位置"><option>左下</option></select></span></div>
              <label class="in1 dim"><input type="checkbox" disabled>存储为默认原点<span class="k">(<u>F</u>)</span></label>
            </div>
            <svg class="brick" viewBox="0 0 42 42" role="img" aria-label="原点预览"><path d="M5 0v42M37 0v42M0 5h42M0 37h42" stroke="#222" stroke-width="2"/><path d="M7 8h29v27H7z" fill="#fff"/><path d="M7 9h4v7H7zM13 9h14v7H13zM29 9h7v7h-7zM7 18h11v7H7zM20 18h16v7H20zM7 27h19v7H7zM28 27h8v7h-8z" fill="#1c779f" stroke="#0d4a67"/><path d="M5 32v10M0 37h10" stroke="#c8202c" stroke-width="3"/></svg>
          </fieldset>
        </div>
      </div>
      <div class="right">
        <fieldset class="g-bound">
          <legend>边界</legend>
          <div class="act"><button type="button" class="sq" id="pick" aria-label="拾取点"><svg class="ic" viewBox="0 0 16 16"><path d="M1 3h11M2 14L14 2M1 9l6-6M7 14l7-7" stroke="#444"/><path d="M3 2.500h11v12" stroke="#111" stroke-width="2"/><circle cx="7" cy="9" r="5" fill="#e4f0fc" stroke="#8db3dc"/><path d="M7 5v8M3 9h8" stroke="#164d9a" stroke-width="2.500"/></svg></button><label for="pick">添加:拾取点</label></div>
          <div class="act"><button type="button" class="sq" id="selobj" aria-label="选择对象"><svg class="ic" viewBox="0 0 16 16"><path d="M1 2h10M1 7l4-4M1 12L10 3M3 14l7-7" stroke="#333" stroke-width="1.300"/><path d="M12 2v4" stroke="#9bb"/><path d="M11 6v8M7 10h8" stroke="#164d9a" stroke-width="2.500"/><path d="M3 14.500h11" stroke="#333"/></svg></button><label for="selobj">添加:选择对象</label></div>
          <div class="act off"><button type="button" class="sq" disabled id="rmb" aria-label="删除"><svg class="ic" viewBox="0 0 16 16"><path d="M1 6h6M1 10l4-4M1 14l7-7M5 14l5-5M11 9v5" stroke="#777" stroke-width="1.500"/><path d="M8 2l6 6M14 2L8 8" stroke="#666" stroke-width="2"/></svg></button><label for="rmb">删除边界<span class="k">(<u>D</u>)</span></label></div>
          <div class="act off"><button type="button" class="sq" disabled id="reb" aria-label="重建"><svg class="ic" viewBox="0 0 16 16"><path d="M1 6h6M1 10l4-4M1 14l7-7M5 14l5-5M10 9v5" stroke="#777" stroke-width="1.500"/><path d="M8 5l4-3 3 3-3 4-4-1z" fill="#888" stroke="#777"/></svg></button><label for="reb">重新创建边界<span class="k">(<u>R</u>)</span></label></div>
          <div class="act off"><button type="button" class="sq" disabled id="view" aria-label="查看"><svg class="ic" viewBox="0 0 16 16"><circle cx="6" cy="6" r="4" fill="#d5d5d5" stroke="#888" stroke-width="1.500"/><path d="M9 9l5 5" stroke="#777" stroke-width="2.500"/></svg></button><label for="view">查看选择集<span class="k">(<u>V</u>)</span></label></div>
        </fieldset>
        <fieldset class="g-opt">
          <legend>选项</legend>
          <label><input type="checkbox" checked>关联<span class="k">(<u>A</u>)</span></label>
          <label><input type="checkbox">创建独立的图案填充<span class="k">(<u>H</u>)</span></label>
          <label for="order" class="tall">绘图次序<span class="k">(<u>W</u>):</span></label>
          <span class="sel face full"><select id="order"><option>置于边界之后</option></select></span>
        </fieldset>
        <div class="act inherit"><button type="button" class="sq" id="inh" aria-label="继承"><svg class="ic" viewBox="0 0 16 16"><path d="M14 1L9 6" stroke="#8f6344" stroke-width="3"/><path d="M9 5l2 2-6 5-3 1z" fill="#222"/><path d="M2 13l2-2 2 3 1-3 2 3 2-3 3 3" stroke="#259c80"/></svg></button><label for="inh">继承特性</label></div>
      </div>
    </div>
    <div class="footer">
      <button type="button" class="btn" disabled>预览</button>
      <span class="spacer"></span>
      <button type="button" class="btn" disabled>确定</button>
      <button type="button" class="btn">取消</button>
      <button type="button" class="btn">帮助</button>
      <button type="button" class="more" aria-label="更多选项"><svg viewBox="0 0 18 18"><circle cx="9" cy="9" r="7.500" fill="#dfe9fa" stroke="#324f86" stroke-width="2"/><path d="M7 5l4 4-4 4" fill="none" stroke="#111" stroke-width="2.500"/></svg></button>
    </div>
  </div>
</form>

<svg class="pointer" viewBox="0 0 76 68" aria-hidden="true"><path d="M0 67L58 11 54 7 75 1 68 22 64 17z" fill="#f8393c"/></svg>

<aside class="mark">
  <svg viewBox="0 0 36 36"><path d="M9 5c-2 0-3 1-3 3v18c0 4 2 5 5 4l18-9c4-2 4-5 1-7L13 4c-1-1-3 0-4 1z" fill="none" stroke="#ccd2df" stroke-width="2.600"/><path d="M2 8v20c1 5 5 7 9 5l4-2" fill="none" stroke="#ccd2df" stroke-width="2.600"/><path d="M14 13l8 4.500-8 4.500z" fill="#ccd2df"/><path d="M24 14v7" stroke="#ccd2df" stroke-width="1.500"/></svg>
  <div><strong>溜溜自学</strong><span>ZiXUE.3D66.COM</span></div>
</aside>
</body>
</html>
```

FILE: styles.css
```css
* { box-sizing: border-box; }
body {
  margin: 0;
  height: 100vh;
  display: flex;
  flex-direction: column;
  overflow: hidden;
  position: relative;
  font: 11px/14px "Noto Sans", "Noto Sans CJK SC", sans-serif;
  color: #111;
}
.defs { position: absolute; }
button, select, input { font: inherit; color: inherit; margin: 0; padding: 0; }
button { border: 0; background: none; display: flex; align-items: center; justify-content: center; }
h1, h2, p { margin: 0; font-weight: normal; }
.ic { width: 16px; height: 16px; flex: none; fill: none; stroke: #2b2f36; stroke-width: 1; }
.ic .b { stroke: #2f659e; }
.ic .n { fill: #24588f; stroke: none; }
.ic use { stroke: none; }

/* application frame */
.app {
  flex: 1;
  min-height: 0;
  overflow: hidden;
  display: flex;
  flex-direction: column;
  border: 1px solid #68777c;
  border-bottom: 0;
  border-radius: 6px 6px 0 0;
  padding: 0 6px;
  background: linear-gradient(90deg, #f4fbfc, #e6f7fa 50%, #f6fbfc);
}
.titlebar {
  height: 25px;
  display: flex;
  align-items: center;
  gap: 4px;
  margin: 0 -6px;
  padding-left: 5px;
  background: linear-gradient(100deg, #e9f4f6, #cdeef3 20%, #e2fbfb 40%, #cfe9ec 60%, #e4fcfb 80%, #d5f2f5);
}
.titlebar h1 { flex: 1; font-size: 11px; }
.winbtns { display: flex; align-self: flex-start; margin-right: 5px; border: 1px solid #86989f; border-top: 0; border-radius: 0 0 4px 4px; overflow: hidden; }
.winbtns button { width: 24px; height: 16px; background: linear-gradient(#eefafa, #d3e6ea); }
.winbtns button + button { border-left: 1px solid #9fb0b6; }
.winbtns .wide { width: 40px; }
.winbtns svg { width: 12px; height: 12px; fill: #fff; stroke: #59636b; }
.client { flex: 1; min-height: 0; display: flex; flex-direction: column; background: #f0f0f0; border: 1px solid #8f9a9c; border-width: 0 1px; margin: 0 -1px; }
.menubar { height: 17px; flex: none; display: flex; align-items: center; padding-left: 5px; color: #777; background: linear-gradient(#fdfdfe, #e9ecf6 50%, #d5dbec); border-top: 1px solid #a7b4bb; }
.menubar > button { padding: 0 6px; }
.mdi { margin-left: auto; display: flex; gap: 1px; padding-right: 1px; }
.mdi button { width: 16px; height: 16px; border: 1px solid #a5b6cd; background: #eef2fa; }
.mdi svg { width: 12px; height: 12px; fill: none; stroke: #7b8da3; }

/* tool rows */
.toolrows { flex: none; display: flex; flex-direction: column; gap: 1px; padding-top: 1px; }
.toolrow { display: flex; height: 24px; gap: 2px; }
.toolbar { display: flex; align-items: center; padding-right: 2px; border: 1px solid #b9b9b9; border-width: 0 1px 1px 0; box-shadow: 0 1px #fff; }
.toolbar.grow { flex: 1; min-width: 0; padding-right: 0; border-right: 0; }
.toolbar > button { width: 20px; height: 20px; flex: none; }
.toolbar > .drop { width: 11px; }
.drop::after { content: ""; border: 2px solid transparent; border-top-color: #b5b5b5; }
.grip { width: 5px; height: 20px; margin: 0 4px 0 2px; border: 1px solid #b8b8b8; border-width: 0 1px; flex: none; box-shadow: inset -2px 0 #fff; }
.sep { width: 2px; height: 16px; margin: 0 2px; background: #666; flex: none; }
.combo, .sel { position: relative; display: inline-flex; }
.combo select, .sel select { appearance: none; border: 1px solid #b2b2b2; border-radius: 0; background: #fff; outline: 0; width: 100%; opacity: 1; }
.combo select { height: 19px; padding-left: 4px; font: 9px/16px "Liberation Mono", "Noto Sans CJK SC", monospace; color: #666; background: linear-gradient(90deg, #f4f4f4, #f4f4f4) no-repeat 0 0 / calc(100% - 16px) 100%, #fff; }
.combo::after, .sel::after { content: ""; position: absolute; right: 5px; top: 50%; margin-top: -1px; border: 3px solid transparent; border-top: 4px solid #a0a0a0; border-bottom: 0; }
.combo .style { width: 88px; }
.combo .wide { width: 200px; }
.combo .workspace { width: 154px; padding-left: 7px; font-size: 9px; }
.layerbox { display: flex; align-items: center; height: 19px; flex: 1; padding-left: 1px; border: 1px solid #b2b2b2; background: #f6f6f6; font: 9px/16px "Liberation Mono", monospace; color: #555; }
.layerbox .ic { width: 15px; height: 15px; }
.swatch { width: 10px; height: 10px; border: 1px solid #222; background: #fff; margin-right: 3px; }
.combo.fill { flex: 1; justify-content: flex-end; }
.combo .bylayer { padding-right: 33px; text-align-last: right; }
.combo.clip::after { display: none; }
.combo .color { width: 30px; padding-left: 6px; font-size: 11px; background: #f4f4f4; border-right: 0; }

/* workspace */
.workspace-area { flex: 1; min-height: 0; display: flex; }
.vbar { flex: none; width: 22px; display: flex; flex-direction: column; align-self: flex-start; padding: 0 1px 4px; border: 1px solid #b5b5b5; border-width: 0 1px 1px 0; }
.vbar button { flex: 1; min-height: 0; }
.draw { height: 380px; }
.modify { height: 341px; width: 24px; }
.order { height: 91px; margin-left: 2px; }
.hgrip { height: 5px; margin: 2px 2px 1px; border: 1px solid #bbb; border-width: 1px 0; background: #fff; flex: none; }
.model { flex: 1; min-width: 0; display: flex; flex-direction: column; border-left: 1px solid #666; }
.canvas { flex: 1; min-height: 0; width: 100%; background: #000; }
.layout-tabs { height: 13px; display: flex; color: #aaa; }
.layout-tabs > button { width: 16px; background: #fff; border: 1px solid #bbb; border-left-width: 0; }
.layout-tabs svg { width: 9px; height: 9px; }
.layout-tabs a { position: relative; color: inherit; text-decoration: none; padding: 0 3px; margin-left: 4px; line-height: 12px; }
.layout-tabs a::before { content: ""; position: absolute; inset: 0; background: #f4f4f4; border: 1px solid #222; border-top: 0; transform: perspective(20px) rotateX(-8deg); }
.layout-tabs a span { position: relative; }
.layout-tabs .active { color: #fff; margin-left: 5px; }
.layout-tabs .active::before { background: #000; }

/* command line and status */
.command { flex: none; display: flex; height: 66px; margin-top: 4px; padding-top: 9px; border-top: 2px solid #999; border-bottom: 1px solid #aaa; padding-bottom: 3px; }
.command .grip { height: 48px; margin-right: 6px; }
.cmdbox { flex: 1; display: flex; flex-direction: column; border: 2px solid #808080; border-width: 2px 0 0 2px; background: #fff; font: 13px/14px "Liberation Mono", "Noto Sans CJK SC", monospace; }
.history { height: 33px; padding-left: 1px; border-bottom: 2px solid #ccc; }
.cmdbox input { flex: 1; min-height: 0; border: 0; outline: 0; }
.scroll { position: relative; width: 20px; background: #f0f0f0; border-top: 1px solid #888; }
.scroll i { position: absolute; border: 3px solid transparent; left: 3px; }
.scroll .up { top: 5px; border-bottom-color: #444; }
.scroll .down { top: 24px; border-top-color: #444; }
.scroll .right { top: 39px; left: -10px; border-left-color: #444; }
.status { flex: none; height: 12px; overflow: hidden; display: flex; align-items: flex-start; gap: 2px; padding: 1px 4px 0; font: 11px/16px "Liberation Mono", "Noto Sans CJK SC", monospace; }
.status output { width: 190px; flex: none; border: 1px solid #aaa; font-size: 9px; color: #999; height: 18px; }
.status button { height: 18px; padding: 0 2px; border: 1px solid #f0f0f0; border-right-color: #aaa; }
.status .on { border-color: #555 #ddd #555 #555; background: #f8f6f6; }
.status button:nth-of-type(7), .status button:nth-of-type(8) { font-size: 9px; }
.tray { margin-left: auto; display: flex; gap: 22px; padding-right: 12px; }
.tray svg { width: 50px; height: 12px; }
.cleanscreen { width: 14px; height: 14px; border: 2px solid #3b5f8e; background: #b8d4ef; }

/* taskbar */
.taskbar { flex: none; height: 14px; display: flex; gap: 4px; padding-left: 1px; overflow: hidden; border-top: 1px solid #39434e; background: linear-gradient(rgba(255,255,255,.25), rgba(10,20,30,.25)), linear-gradient(90deg, #6c7a88, #718091 36%, #6f96c8 39%, #557087 50%, #7ea5d5 65%, #6688ac 80%, #566b7c); }
.taskbar button { width: 50px; height: 30px; align-items: flex-start; border: 1px solid #384654; border-radius: 3px; background: linear-gradient(#b0bac4, #5b6977 14px); }
.taskbar button:first-child { width: 42px; }
.taskbar .light { background: linear-gradient(#dce5ed, #8da1b5 14px); }
.taskbar button svg { width: 40px; height: 14px; }
.systray { width: 190px; height: 14px; margin-left: auto; }

/* hatch dialog */
.dialog {
  position: absolute;
  left: 421px;
  top: 85px;
  width: 452px;
  padding: 0 6px 5px;
  border: 1px solid #454e58;
  border-radius: 7px;
  box-shadow: inset 0 0 0 1px #9eb0c0;
  background: linear-gradient(#b9d3ef, #a9cbee 26px, #adcdf0 50px, #8a97a5 60px, #aab2b9 125px, #c5c8ca 142px, #151b20 143px, #161d22);
}
.dlg-title { height: 25px; display: flex; align-items: center; gap: 3px; }
.dlg-title h2 { flex: 1; font-size: 11px; }
.dlg-btns { display: flex; align-self: flex-start; border: 1px solid #5b6f88; border-top: 0; border-radius: 0 0 4px 4px; overflow: hidden; }
.dlg-btns button { width: 24px; height: 16px; background: linear-gradient(#d0dbe8, #a8bdd3 50%, #8fabc8 51%, #bcd3ea); }
.dlg-btns .close { width: 41px; background: linear-gradient(#e6a393, #d3614a 50%, #b92f16 51%, #dc7a55); }
.dlg-btns svg { width: 12px; height: 12px; }
.dlg-client { background: #f0f0f0; border: 1px solid #59697a; padding: 7px 4px 0 9px; font: 11px/12px "Noto Sans CJK SC", sans-serif; }
.columns { display: grid; grid-template-columns: 262px minmax(0, 1fr); gap: 11px; }
.tabs { display: flex; align-items: flex-end; height: 18px; }
.tab { height: 17px; padding: 0 3px; border: 1px solid #8d8d8d; border-bottom: 0; background: #f2f2f2; }
.tab.current { height: 19px; padding: 0 4px 1px; background: #fff; margin-bottom: -1px; position: relative; }
.panel { background: #fff; border: 1px solid #8f8f8f; padding: 5px 7px 10px 8px; display: flex; flex-direction: column; }
fieldset { margin: 0; min-width: 0; padding: 2px 4px 2px 7px; border: 1px solid #dcdcdc; border-radius: 3px; }
legend { padding: 0 3px; margin-left: -4px; line-height: 12px; height: 12px; }
.k, .lat { font-family: "Liberation Mono", monospace; font-size: 9px; }
.k { padding-left: 2px; white-space: pre; }
.k.iso { padding-left: 0; }
u { text-underline-offset: 1px; }
.off { color: #999; }
.dim { color: #6d6d6d; }
.pair { display: grid; grid-template-columns: 99px 94px auto; align-items: center; justify-content: start; height: 24px; white-space: nowrap; }
.g-angle, .g-origin { margin-top: 5px; }
.g-angle .pair:nth-of-type(1) { height: 20px; }
.g-angle .pair:nth-of-type(2) { height: 18px; }
.g-angle .pair:nth-of-type(3) { height: 28px; }
.g-angle .pair:nth-of-type(5) { height: 22px; }
.g-angle { padding-bottom: 6px; }
.sel select { height: 18px; padding-left: 2px; border-color: #c9c9c9; color: inherit; }
.sel select:disabled { background: #f6f6f6; border-color: #b7b7b7; }
.off .sel select:disabled { background: #f9f9f9; }
.sel::after { border-top-color: #111; right: 4px; }
.sel:has(:disabled)::after { border-top-color: #999; }
.sel.face select { background: linear-gradient(#f4f4f4, #ebebeb 50%, #dddddd 51%, #d2d2d2); border-color: #777; border-radius: 2px; }
.w94 { width: 94px; }
.w82 { width: 82px; }
.w106 { width: 106px; color: #6d6d6d; }
.full { width: 130px; }
.flat .lat { padding-left: 1px; }
#pattern { padding-left: 5px; font-size: 9px; }
.dots { width: 22px; height: 17px; margin-left: 1px; border: 1px solid #aaa; border-radius: 2px; background: #f6f6f6; font: 9px/12px "Liberation Mono", monospace; }
.dots.focus { border: 2px solid #36a0cc; outline: 1px dotted #555; outline-offset: -4px; background: #e7f0f4; }
.sample { width: 93px; height: 19px; border: 1px solid #888; }
input[type="text"].lat { width: 55px; height: 16px; border: 1px solid #999; padding-left: 2px; background: #fff; }
input[type="checkbox"], input[type="radio"] { appearance: none; width: 12px; height: 12px; flex: none; margin-right: 2px; border: 1px solid #999; background: linear-gradient(135deg, #e4e4e4, #fff); position: relative; }
input[type="radio"] { border-radius: 50%; margin-right: 3px; }
input[type="radio"]:checked { border-color: #2d6e99; background: radial-gradient(circle, #1e5b86 0 3px, #cfe6f4 4px); }
input[type="checkbox"]:checked::after { content: ""; position: absolute; left: 3px; top: 0; width: 4px; height: 8px; border: solid #3a56a5; border-width: 0 2px 2px 0; transform: rotate(40deg); }
input[type="checkbox"]:disabled { border-color: #b5b5b5; background: #fafafa; }
.pair label, .origin label, .g-opt label, .act label { display: flex; align-items: center; }
label .k { padding-top: 1px; }
.g-origin { position: relative; padding-top: 6px; }
.origin { display: grid; grid-template-rows: 18px 18px 22px 20px 20px 18px; align-items: center; white-space: nowrap; }
.in1 { padding-left: 18px; }
.in2 { padding-left: 45px; display: flex; }
div.in1 { display: flex; align-items: center; gap: 4px; }
.brick { position: absolute; right: 28px; bottom: 14px; width: 42px; height: 42px; }
.sq { width: 22px; height: 22px; flex: none; border: 1px solid #888; border-radius: 2px; background: linear-gradient(#f7f7f7, #dedede); }
.sq:disabled { border-color: #bcbcbc; background: #f4f4f4; }
.right fieldset { padding-left: 6px; border-color: #e0e0e0; }
.right .g-bound { padding-top: 2px; padding-bottom: 7px; }
.act { height: 29px; display: flex; align-items: center; gap: 8px; white-space: nowrap; }
.right .g-opt { margin-top: 5px; padding-top: 4px; padding-bottom: 12px; padding-right: 0; }
.g-opt label { height: 18px; white-space: nowrap; }
.g-opt .tall { height: 22px; }
.g-opt .sel { margin: 2px 0; }
.inherit { margin-top: 14px; padding-left: 7px; }
.footer { height: 36px; display: flex; align-items: center; gap: 10px; padding: 0 5px 3px 0; }
.spacer { flex: 1; }
.btn { width: 64px; height: 18px; border: 1px solid #777; border-radius: 3px; background: linear-gradient(#f4f4f4, #ebebeb 50%, #dddddd 51%, #d2d2d2); }
.btn:disabled { color: #888; border-color: #b5b5b5; background: #f3f3f3; }
.more { width: 18px; height: 18px; }
.more svg { width: 18px; height: 18px; }
.pointer { position: absolute; left: 651px; top: 150px; width: 76px; height: 68px; }

/* watermark */
.mark { position: absolute; right: 55px; bottom: 18px; width: 180px; height: 86px; display: flex; align-items: center; gap: 11px; padding-left: 14px; background: #222f56; color: #ccd2df; white-space: nowrap; }
.mark svg { width: 36px; height: 36px; flex: none; }
.mark div { display: flex; flex-direction: column; gap: 2px; }
.mark strong { font: 500 26px/30px "Noto Sans CJK SC", sans-serif; }
.mark span { font: 12px/14px "DejaVu Sans", sans-serif; }
```
